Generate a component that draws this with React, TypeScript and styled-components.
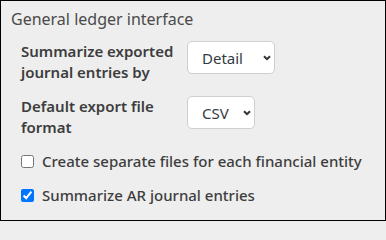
import React, { useState } from "react";
import styled, { createGlobalStyle } from "styled-components";

const GlobalStyle = createGlobalStyle`
  html, body {
    margin: 0;
    padding: 0;
    background: #eeeeee;
    overflow: hidden;
  }
  * {
    box-sizing: border-box;
  }
`;

const Frame = styled.div`
  width: 386px;
  height: 221px;
  border: 1px solid #000;
  background: #eeeeee;
  padding: 8px 10px 0 10px;
  font-family: "Noto Sans", "Open Sans", sans-serif;
  color: #3d3d3d;
`;

const Title = styled.div`
  font-size: 16px;
  line-height: 20px;
  color: #4a4a4a;
  margin-bottom: 12px;
`;

const Body = styled.div`
  display: flex;
  flex-direction: column;
  padding-left: 10px;
`;

const FieldRow = styled.div`
  display: grid;
  grid-template-columns: 166px auto;
  align-items: start;
  margin-bottom: 13px;
`;

const Label = styled.label`
  font-size: 15px;
  font-weight: 600;
  line-height: 21px;
  color: #3d3d3d;
`;

const SelectWrap = styled.div<{ $width: number }>`
  position: relative;
  width: ${(p) => p.$width}px;
  height: 33px;
`;

const Select = styled.select`
  appearance: none;
  width: 100%;
  height: 100%;
  border: 1px solid #cfcfcf;
  border-radius: 5px;
  background: #fff;
  padding: 0 0 0 14px;
  font-family: "Noto Sans", "Open Sans", sans-serif;
  font-size: 15px;
  color: #333a44;
  outline: none;
`;

const Chevron = styled.svg`
  position: absolute;
  right: 4px;
  top: 14px;
  pointer-events: none;
`;

const CheckRow = styled.label`
  display: flex;
  align-items: center;
  gap: 8px;
  font-size: 15px;
  font-weight: 500;
  line-height: 20px;
  color: #3d3d3d;
  margin-bottom: 14px;

  input {
    width: 13px;
    height: 13px;
    margin: 0;
    accent-color: #0075ff;
  }
`;

function Dropdown({
  width,
  value,
  options,
}: {
  width: number;
  value: string;
  options: string[];
}) {
  const [v, setV] = useState(value);
  return (
    <SelectWrap $width={width}>
      <Select value={v} onChange={(e) => setV(e.target.value)}>
        {options.map((o) => (
          <option key={o}>{o}</option>
        ))}
      </Select>
      <Chevron width="8" height="6" viewBox="0 0 8 6">
        <path d="M1 1.2 L4 4.2 L7 1.2" fill="none" stroke="#333" strokeWidth="2" />
      </Chevron>
    </SelectWrap>
  );
}

export default function App() {
  const [separate, setSeparate] = useState(false);
  const [summarizeAR, setSummarizeAR] = useState(true);

  return (
    <>
      <GlobalStyle />
      <Frame>
        <Title>General ledger interface</Title>
        <Body>
          <FieldRow>
            <Label>
              Summarize exported
              <br />
              journal entries by
            </Label>
            <Dropdown width={88} value="Detail" options={["Detail", "Summary"]} />
          </FieldRow>
          <FieldRow>
            <Label>
              Default export file
              <br />
              format
            </Label>
            <Dropdown width={68} value="CSV" options={["CSV", "XML"]} />
          </FieldRow>
          <CheckRow>
            <input
              type="checkbox"
              checked={separate}
              onChange={(e) => setSeparate(e.target.checked)}
            />
            Create separate files for each financial entity
          </CheckRow>
          <CheckRow>
            <input
              type="checkbox"
              checked={summarizeAR}
              onChange={(e) => setSummarizeAR(e.target.checked)}
            />
            Summarize AR journal entries
          </CheckRow>
        </Body>
      </Frame>
    </>
  );
}
